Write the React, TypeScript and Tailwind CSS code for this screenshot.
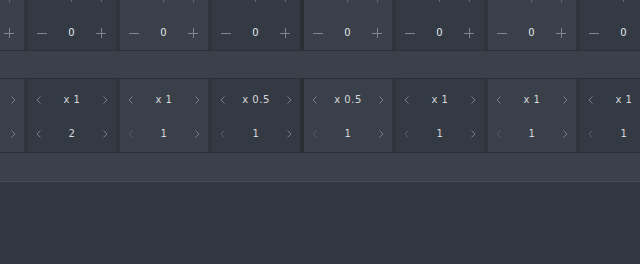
import React from "react";

type Column = {
  rate: string;
  count: number;
};

// the first column sits mostly off-screen, only its right edge shows
const columns: Column[] = [
  { rate: "", count: 1 },
  { rate: "x 1", count: 2 },
  { rate: "x 1", count: 1 },
  { rate: "x 0.5", count: 1 },
  { rate: "x 0.5", count: 1 },
  { rate: "x 1", count: 1 },
  { rate: "x 1", count: 1 },
  { rate: "x 1", count: 1 },
];

const Minus = () => (
  <svg width="10" height="10" viewBox="0 0 10 10">
    <path d="M0 5.5h10" stroke="#7f858c" strokeWidth="1" />
  </svg>
);

const Plus = () => (
  <svg width="10" height="10" viewBox="0 0 10 10">
    <path d="M0 5.5h10M5.5 0v10" stroke="#7f858c" strokeWidth="1" />
  </svg>
);

const Chevron = ({ dir, dim }: { dir: "left" | "right"; dim?: boolean }) => (
  <svg width="5" height="8" viewBox="0 0 5 8">
    <path
      d={dir === "left" ? "M4.5 0.5L1 4l3.5 3.5" : "M0.5 0.5L4 4L0.5 7.5"}
      fill="none"
      stroke={dim ? "#565c64" : "#7a8088"}
      strokeWidth="1"
    />
  </svg>
);

const Separator = ({ group }: { group?: boolean }) => (
  <div className={group ? "w-[4px] shrink-0 bg-[#2a2e35]" : "w-[4px] shrink-0 bg-[#30353d]"} />
);

const shade = (i: number) => (i % 2 === 0 ? "bg-[#3a4049]" : "bg-[#343a43]");

const OffsetRow = ({ children }: { children: (col: Column, i: number) => React.ReactNode }) => (
  <div className="flex -ml-[64px] h-full">
    {columns.map((col, i) => (
      <React.Fragment key={i}>
        {children(col, i)}
        {i < columns.length - 1 && <Separator group={i === 3} />}
      </React.Fragment>
    ))}
  </div>
);

const Stepper = ({ value }: { value: string }) => (
  <div className="flex items-center justify-between pl-[9px] pr-[10px] h-[10px]">
    <Minus />
    <span className="text-[10px] leading-none text-[#e4e5e7]">{value}</span>
    <Plus />
  </div>
);

const Picker = ({ label, dimLeft }: { label: string; dimLeft?: boolean }) => (
  <div className="flex items-center justify-between px-[8px] h-[34px]">
    <Chevron dir="left" dim={dimLeft} />
    <span className="text-[10px] leading-none text-[#d6d8db] tracking-[0.5px]">{label}</span>
    <Chevron dir="right" />
  </div>
);

export default function App() {
  return (
    <div className="w-[640px] h-[264px] overflow-hidden bg-[#323842] font-['DejaVu_Sans',sans-serif]">
      <div className="h-[50px]">
        <OffsetRow>
          {(_, i) => (
            <div className={`w-[88px] shrink-0 flex flex-col ${shade(i)}`}>
              <div className="flex h-[2px] pl-[43px]">
                <div className="w-[1px] h-[2px] bg-[#666c74]" />
                <div className="w-[1px] h-[2px] bg-[#666c74] ml-[29px]" />
              </div>
              <div className="mt-[26px]">
                <Stepper value={i === 0 ? "" : "0"} />
              </div>
            </div>
          )}
        </OffsetRow>
      </div>
      <div className="h-[1px] bg-[#2a2e35]" />
      <div className="h-[27px] bg-[#3b414a]" />
      <div className="h-[1px] bg-[#2a2e35]" />
      <div className="h-[73px]">
        <OffsetRow>
          {(col, i) => (
            <div className={`w-[88px] shrink-0 flex flex-col pt-[4px] ${shade(i)}`}>
              <Picker label={col.rate} />
              <Picker label={i === 0 ? "" : String(col.count)} dimLeft={col.count <= 1} />
            </div>
          )}
        </OffsetRow>
      </div>
      <div className="h-[1px] bg-[#2a2e35]" />
      <div className="h-[28px] bg-[#3b414a]" />
      <div className="h-[1px] bg-[#464b53]" />
    </div>
  );
}
